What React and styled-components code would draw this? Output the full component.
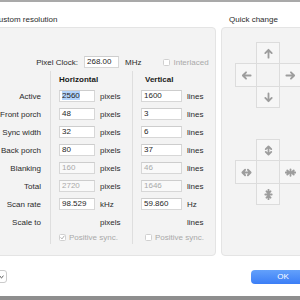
import React from 'react';
import styled, { createGlobalStyle } from 'styled-components';

const GlobalStyle = createGlobalStyle`
  html, body {
    margin: 0;
    padding: 0;
    width: 300px;
    height: 300px;
    overflow: hidden;
    background: #fff;
  }
  body {
    font-family: "Liberation Sans", Arial, sans-serif;
    font-size: 8px;
    color: #2b2b2b;
  }
`;

const Screen = styled.div`
  width: 300px;
  height: 300px;
  overflow: hidden;
  display: flex;
  flex-direction: column;
  background: #fff;
`;

const TopEdge = styled.div`
  flex: none;
  height: 2px;
  background: #a9a9a9;
`;

const BottomEdge = styled.div`
  flex: none;
  height: 4px;
  background: #8e8e8e;
`;

const Window = styled.div`
  flex: 1;
  display: flex;
  flex-direction: column;
  width: 330px;
  margin-left: -15px;
`;

const Sections = styled.div`
  display: flex;
  gap: 5px;
  margin-top: 13px;
`;

const Section = styled.section`
  display: flex;
  flex-direction: column;
  width: ${p => p.$w}px;
`;

const SectionTitle = styled.div`
  height: 10px;
  line-height: 10px;
  padding-left: 8px;
  margin-bottom: 2px;
  white-space: nowrap;
`;

const Panel = styled.div`
  box-sizing: border-box;
  height: 229px;
  background: #f3f3f3;
  border: 1px solid #e4e4e4;
  border-radius: 4px;
  padding-top: ${p => p.$pt}px;
  display: flex;
  flex-direction: column;
  align-items: ${p => (p.$center ? 'center' : 'stretch')};
  gap: ${p => p.$gap || 0}px;
`;

const ClockRow = styled.div`
  display: flex;
  align-items: center;
  height: 12px;
`;

const ClockLabel = styled.span`
  width: 92px;
  text-align: right;
  margin-right: 6px;
`;

const Field = styled.div`
  box-sizing: border-box;
  width: ${p => p.$w}px;
  height: 12px;
  line-height: 10px;
  padding-left: 2px;
  border: 1px solid #d7d7d7;
  border-top-color: #cdcdcd;
  background: ${p => (p.$disabled ? '#f9f9f9' : '#fff')};
  color: ${p => (p.$disabled ? '#a9a9a9' : '#1f1f1f')};
  visibility: ${p => (p.$hidden ? 'hidden' : 'visible')};
  white-space: nowrap;
`;

const Selection = styled.span`
  background: #b3d4fc;
`;

const Unit = styled.span`
  margin-left: ${p => p.$gap || 5}px;
  color: ${p => (p.$muted ? '#a9a9a9' : '#2b2b2b')};
  white-space: nowrap;
`;

const CheckItem = styled.label`
  display: flex;
  align-items: center;
  gap: 3px;
  margin-left: ${p => p.$ml || 0}px;
  color: #a9a9a9;
  white-space: nowrap;
`;

const Box = styled.span`
  box-sizing: border-box;
  width: 7px;
  height: 7px;
  border: 1px solid #d0d0d0;
  border-radius: 1.5px;
  background: #fff;
  display: flex;
  align-items: center;
  justify-content: center;
`;

const Table = styled.div`
  display: grid;
  grid-template-columns: 64px 82px 1fr;
  margin-top: 3px;
`;

const HeadCell = styled.div`
  height: 16px;
  display: flex;
  align-items: center;
  padding-left: ${p => p.$pl || 0}px;
  border-left: ${p => (p.$divider ? '1px solid #dedede' : 'none')};
  font-weight: bold;
  color: #1a1a1a;
`;

const LabelCell = styled.div`
  height: ${p => p.$h || 18}px;
  display: flex;
  align-items: center;
  justify-content: flex-end;
  padding-right: 9px;
  white-space: nowrap;
`;

const Cell = styled.div`
  height: ${p => p.$h || 18}px;
  display: flex;
  align-items: center;
  padding-left: ${p => p.$pl}px;
  border-left: 1px solid #dedede;
`;

const Cross = styled.div`
  display: grid;
  grid-template-columns: repeat(3, 22px);
  grid-template-rows: repeat(3, 22px);
  grid-template-areas:
    ". top ."
    "left mid right"
    ". bottom .";
`;

const ArrowCell = styled.div`
  grid-area: ${p => p.$area};
  box-sizing: border-box;
  border: 1px solid #dcdcdc;
  background: #f6f6f6;
  display: flex;
  align-items: center;
  justify-content: center;
  margin: ${p => (p.$area === 'top' || p.$area === 'bottom' ? '0 -1px' : '-1px 0')};
`;

const Footer = styled.div`
  flex: 1;
  display: flex;
  align-items: center;
  justify-content: space-between;
  padding-top: 1px;
`;

const PopupButton = styled.div`
  box-sizing: border-box;
  width: 22px;
  height: 13px;
  border: 1px solid #cbcbcb;
  border-radius: 3px;
  background: #fff;
  display: flex;
  align-items: center;
  justify-content: flex-end;
  padding-right: 2px;
`;

const OkButton = styled.div`
  width: 64px;
  height: 14px;
  border-radius: 4px;
  background: linear-gradient(#63a1fb, #3b7ef6);
  color: #fff;
  display: flex;
  align-items: center;
  justify-content: center;
  font-size: 8px;
`;

const Arrow = ({ d }) => (
  <svg width="11" height="11" viewBox="0 0 12 12" fill="none" stroke="#9d9d9d" strokeWidth="2" strokeLinecap="round" strokeLinejoin="round">
    <path d={d} />
  </svg>
);

const arrows = {
  up: 'M6 10.5V2M2.5 5.5L6 2l3.5 3.5',
  down: 'M6 1.5V10M2.5 6.5L6 10l3.5-3.5',
  left: 'M10.5 6H2M5.5 2.5L2 6l3.5 3.5',
  right: 'M1.5 6H10M6.5 2.5L10 6l-3.5 3.5',
  upDown: 'M6 2v8M3 4.5l3-3 3 3M3 7.5l3 3 3-3',
  leftRight: 'M2 6h8M4.5 3l-3 3 3 3M7.5 3l3 3-3 3',
  inH: 'M0.8 6h3.7M2.5 3.8L4.7 6 2.5 8.2M11.2 6H7.5M9.5 3.8L7.3 6l2.2 2.2M6 2.5v7',
  inV: 'M6 0.8v3.7M3.8 2.5L6 4.7l2.2-2.2M6 11.2V7.5M3.8 9.5L6 7.3l2.2 2.2M2.5 6h7',
};

const QuickCross = ({ top, left, right, bottom }) => (
  <Cross>
    <ArrowCell $area="top"><Arrow d={top} /></ArrowCell>
    <ArrowCell $area="left"><Arrow d={left} /></ArrowCell>
    <ArrowCell $area="right"><Arrow d={right} /></ArrowCell>
    <ArrowCell $area="bottom"><Arrow d={bottom} /></ArrowCell>
  </Cross>
);

const Check = ({ checked }) => (
  <Box>
    {checked && (
      <svg width="5" height="5" viewBox="0 0 6 6" fill="none" stroke="#b0b0b0" strokeWidth="1.2" strokeLinecap="round" strokeLinejoin="round">
        <path d="M1 3.2l1.4 1.5L5 1.2" />
      </svg>
    )}
  </Box>
);

const rows = [
  { label: 'Active', h: '2560', v: '1600', selected: true },
  { label: 'Front porch', h: '48', v: '3' },
  { label: 'Sync width', h: '32', v: '6' },
  { label: 'Back porch', h: '80', v: '37' },
  { label: 'Blanking', h: '160', v: '46', disabled: true },
  { label: 'Total', h: '2720', v: '1646', disabled: true },
  { label: 'Scan rate', h: '98.529', v: '59.860', hu: 'kHz', vu: 'Hz' },
  { label: 'Scale to', h: '', v: '', hidden: true },
];

const H_PAD = 8;
const V_PAD = 8;

export default function App() {
  return (
    <>
      <GlobalStyle />
      <Screen>
        <TopEdge />
        <Window>
          <Sections>
            <Section $w={231}>
              <SectionTitle>Custom resolution</SectionTitle>
              <Panel $pt={28}>
                <ClockRow>
                  <ClockLabel>Pixel Clock:</ClockLabel>
                  <Field $w={35}>268.00</Field>
                  <Unit $gap={6}>MHz</Unit>
                  <CheckItem $ml={22}>
                    <Check />
                    Interlaced
                  </CheckItem>
                </ClockRow>
                <Table>
                  <HeadCell />
                  <HeadCell $divider $pl={H_PAD}>Horizontal</HeadCell>
                  <HeadCell $divider $pl={V_PAD + 4}>Vertical</HeadCell>
                  {rows.map(r => (
                    <React.Fragment key={r.label}>
                      <LabelCell>{r.label}</LabelCell>
                      <Cell $pl={H_PAD}>
                        <Field $w={36} $disabled={r.disabled} $hidden={r.hidden}>
                          {r.selected ? <Selection>{r.h}</Selection> : r.h}
                        </Field>
                        <Unit>{r.hu || 'pixels'}</Unit>
                      </Cell>
                      <Cell $pl={V_PAD}>
                        <Field $w={41} $disabled={r.disabled} $hidden={r.hidden}>{r.v}</Field>
                        <Unit>{r.vu || 'lines'}</Unit>
                      </Cell>
                    </React.Fragment>
                  ))}
                  <LabelCell $h={13} />
                  <Cell $pl={H_PAD} $h={13}>
                    <CheckItem>
                      <Check checked />
                      Positive sync.
                    </CheckItem>
                  </Cell>
                  <Cell $pl={V_PAD + 4} $h={13}>
                    <CheckItem>
                      <Check />
                      Positive sync.
                    </CheckItem>
                  </Cell>
                </Table>
              </Panel>
            </Section>
            <Section $w={94}>
              <SectionTitle>Quick change</SectionTitle>
              <Panel $pt={14} $gap={31} $center>
                <QuickCross top={arrows.up} left={arrows.left} right={arrows.right} bottom={arrows.down} />
                <QuickCross top={arrows.upDown} left={arrows.leftRight} right={arrows.inH} bottom={arrows.inV} />
              </Panel>
            </Section>
          </Sections>
          <Footer>
            <PopupButton>
              <svg width="5" height="4" viewBox="0 0 5 4" fill="none" stroke="#444" strokeWidth="1" strokeLinecap="round">
                <path d="M0.8 1.2L2.5 2.8 4.2 1.2" />
              </svg>
            </PopupButton>
            <OkButton>OK</OkButton>
          </Footer>
        </Window>
        <BottomEdge />
      </Screen>
    </>
  );
}
